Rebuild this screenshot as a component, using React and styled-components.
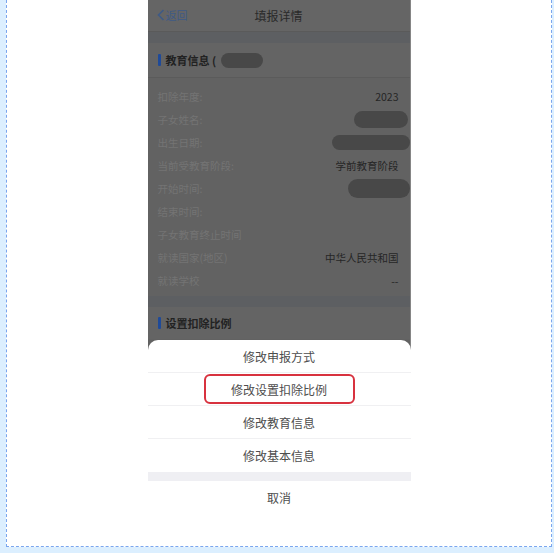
import React from "react";
import styled, { createGlobalStyle } from "styled-components";

const GlobalStyle = createGlobalStyle`
  html, body {
    margin: 0;
    padding: 0;
    background: #dcefff;
    font-family: "Noto Sans CJK SC", "Liberation Sans", sans-serif;
  }
`;

const Frame = styled.div`
  width: 554px;
  height: 553px;
  box-sizing: border-box;
  padding: 0 2px 6px 6px;
  background: #dcefff;
`;

const Canvas = styled.div`
  height: 100%;
  box-sizing: border-box;
  background: #fff;
  border: 1px dashed #7aa6ee;
  border-top: none;
  display: flex;
  justify-content: center;
`;

const Phone = styled.div`
  position: relative;
  width: 263px;
  height: 100%;
  overflow: hidden;
  display: flex;
  flex-direction: column;
`;

const Page = styled.div`
  flex: 1;
  background: #626262;
  border-right: 1px solid #858585;
`;

const NavBar = styled.div`
  height: 31px;
  display: flex;
  align-items: center;
  justify-content: center;
  position: relative;
  background: #656565;
  border-bottom: 1px solid #5a5a5a;
  font-size: 12px;
  color: #2a2a2a;
`;

const Back = styled.span`
  position: absolute;
  left: 9px;
  top: 7px;
  display: flex;
  align-items: center;
  gap: 1px;
  font-size: 11px;
  color: #3e5a86;
`;

const Band = styled.div`
  height: ${(p) => p.h}px;
  background: #5d5f62;
`;

const SectionHead = styled.div`
  height: ${(p) => p.h || 34}px;
  display: flex;
  align-items: center;
  gap: 5px;
  padding-left: 10px;
  background: #646464;
  border-bottom: ${(p) => (p.noLine ? "none" : "1px solid #5b5b5b")};
  font-size: 11px;
  font-weight: 700;
  color: #222;
`;

const Mark = styled.span`
  width: 3px;
  height: 12px;
  border-radius: 1px;
  background: #1f4a98;
`;

const Blob = styled.span`
  display: inline-block;
  width: ${(p) => p.w}px;
  height: ${(p) => p.h}px;
  border-radius: ${(p) => p.h / 2}px;
  background: #484848;
  filter: blur(0.6px);
  margin-right: ${(p) => p.mr || 0}px;
`;

const Rows = styled.div`
  padding: 7px 0 4px;
  background: #626262;
`;

const Row = styled.div`
  height: 23px;
  display: flex;
  align-items: center;
  justify-content: space-between;
  padding: 0 11px 0 10px;
  font-size: 10.5px;
`;

const Label = styled.span`
  color: #747474;
`;

const Value = styled.span`
  color: #262626;
  display: flex;
  align-items: center;
`;

const Sheet = styled.div`
  position: absolute;
  left: 0;
  right: 0;
  bottom: 0;
  top: 340px;
  background: #fff;
  border-radius: 10px 10px 0 0;
  display: flex;
  flex-direction: column;
`;

const Item = styled.div`
  height: 33px;
  flex: none;
  display: flex;
  align-items: center;
  justify-content: center;
  font-size: 12px;
  color: #4d4d4d;
  border-bottom: ${(p) => (p.last ? "none" : "1px solid #f0f0f2")};
  box-sizing: border-box;
`;

const Highlight = styled.span`
  display: flex;
  align-items: center;
  justify-content: center;
  width: 151px;
  height: 30px;
  box-sizing: border-box;
  border: 2px solid #d8323f;
  border-radius: 6px;
`;

const Gap = styled.div`
  height: 9px;
  flex: none;
  background: #efeff3;
`;

const rows = [
  ["扣除年度:", "2023"],
  ["子女姓名:", { w: 54, h: 17, mr: -9 }],
  ["出生日期:", { w: 78, h: 15, mr: -11 }],
  ["当前受教育阶段:", "学前教育阶段"],
  ["开始时间:", { w: 62, h: 19, mr: -11 }],
  ["结束时间:", ""],
  ["子女教育终止时间", ""],
  ["就读国家(地区)", "中华人民共和国"],
  ["就读学校", "--"],
];

const actions = ["修改申报方式", "修改设置扣除比例", "修改教育信息", "修改基本信息"];

export default function App() {
  return (
    <Frame>
      <GlobalStyle />
      <Canvas>
        <Phone>
          <Page>
            <NavBar>
              <Back>
                <svg width="8" height="12" viewBox="0 0 8 12">
                  <path d="M6.5 1 L1.5 6 L6.5 11" fill="none" stroke="#3e5a86" strokeWidth="1.6" />
                </svg>
                返回
              </Back>
              填报详情
            </NavBar>
            <Band h={11} />
            <SectionHead>
              <Mark />
              教育信息 (
              <Blob w={42} h={15} />
            </SectionHead>
            <Rows>
              {rows.map(([label, value]) => (
                <Row key={label}>
                  <Label>{label}</Label>
                  <Value>
                    {typeof value === "object" ? <Blob {...value} /> : value}
                  </Value>
                </Row>
              ))}
            </Rows>
            <Band h={11} />
            <SectionHead h={32} noLine>
              <Mark />
              设置扣除比例
            </SectionHead>
          </Page>
          <Sheet>
            {actions.map((a, i) => (
              <Item key={a} last={i === actions.length - 1}>
                {i === 1 ? <Highlight>{a}</Highlight> : a}
              </Item>
            ))}
            <Gap />
            <Item last>取消</Item>
          </Sheet>
        </Phone>
      </Canvas>
    </Frame>
  );
}
